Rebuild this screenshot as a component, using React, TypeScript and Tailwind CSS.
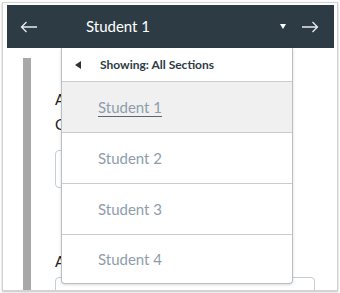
const students = ["Student 1", "Student 2", "Student 3", "Student 4"];

function ArrowLeft() {
  return (
    <svg width="18" height="12" viewBox="0 0 18 12" fill="none" stroke="#e8ecef" strokeWidth="1.3">
      <path d="M17 6H1.5M6.5 1L1.5 6l5 5" />
    </svg>
  );
}

function ArrowRight() {
  return (
    <svg width="18" height="12" viewBox="0 0 18 12" fill="none" stroke="#e8ecef" strokeWidth="1.3">
      <path d="M1 6h15.5M11.5 1l5 5-5 5" />
    </svg>
  );
}

export default function App() {
  return (
    <div className="w-[340px] h-[293px] bg-white p-[2px] font-['Lato','Open_Sans',sans-serif]">
      <div className="relative h-[289px] border border-[#d3d3d3] shadow-[0_1px_2px_rgba(0,0,0,0.25)] pl-[4px] pr-[3px] pt-[2px] overflow-hidden">
        <header className="flex h-[43px] items-center bg-[#2d3b45] pl-[13px] pr-[15px] text-white">
          <ArrowLeft />
          <span className="ml-[48px] text-[15px] leading-none">Student 1</span>
          <span className="ml-auto mr-[15px] h-0 w-0 border-x-[3.5px] border-t-[5px] border-x-transparent border-t-white" />
          <ArrowRight />
        </header>

        <div className="flex pl-[16px] pt-[10px]">
          <div className="h-[240px] w-[8px] bg-[#a8a8a8]" />
          <div className="ml-[24px] flex flex-1 flex-col pr-[19px] text-[15px] text-[#222]">
            <span className="mt-[34px] leading-none">A</span>
            <span className="mt-[10px] leading-none">C</span>
            <div className="mt-[18px] h-[38px] w-[200px] rounded-[4px] border border-[#c7cdd1]" />
            <span className="mt-[66px] leading-none">A</span>
            <div className="mt-[8px] h-[30px] rounded-[4px] border border-[#c7cdd1]" />
          </div>
        </div>

        <div className="absolute left-[58px] top-[45px] w-[232px] rounded-b-[4px] border border-t-0 border-[#b9c0c5] bg-white shadow-[0_1px_3px_rgba(0,0,0,0.15)]">
          <div className="flex h-[34px] items-center border-b border-[#c7cdd1] pl-[13px] text-[12px] font-bold text-[#2d3b45]">
            <span className="h-0 w-0 border-y-[4px] border-r-[6px] border-y-transparent border-r-[#333]" />
            <span className="ml-[19px]">Showing: All Sections</span>
          </div>
          {students.map((s, i) => (
            <div
              key={s}
              className={`flex items-center pl-[36px] text-[15px] text-[#8e9dab] ${
                i === 0 ? "bg-[#f0f0f0]" : ""
              } ${i < students.length - 1 ? "h-[51px] border-b border-[#c7cdd1]" : "h-[48px]"}`}
            >
              <span className={i === 0 ? "underline decoration-[#5b6770] underline-offset-[3px]" : ""}>{s}</span>
            </div>
          ))}
        </div>
      </div>
    </div>
  );
}
